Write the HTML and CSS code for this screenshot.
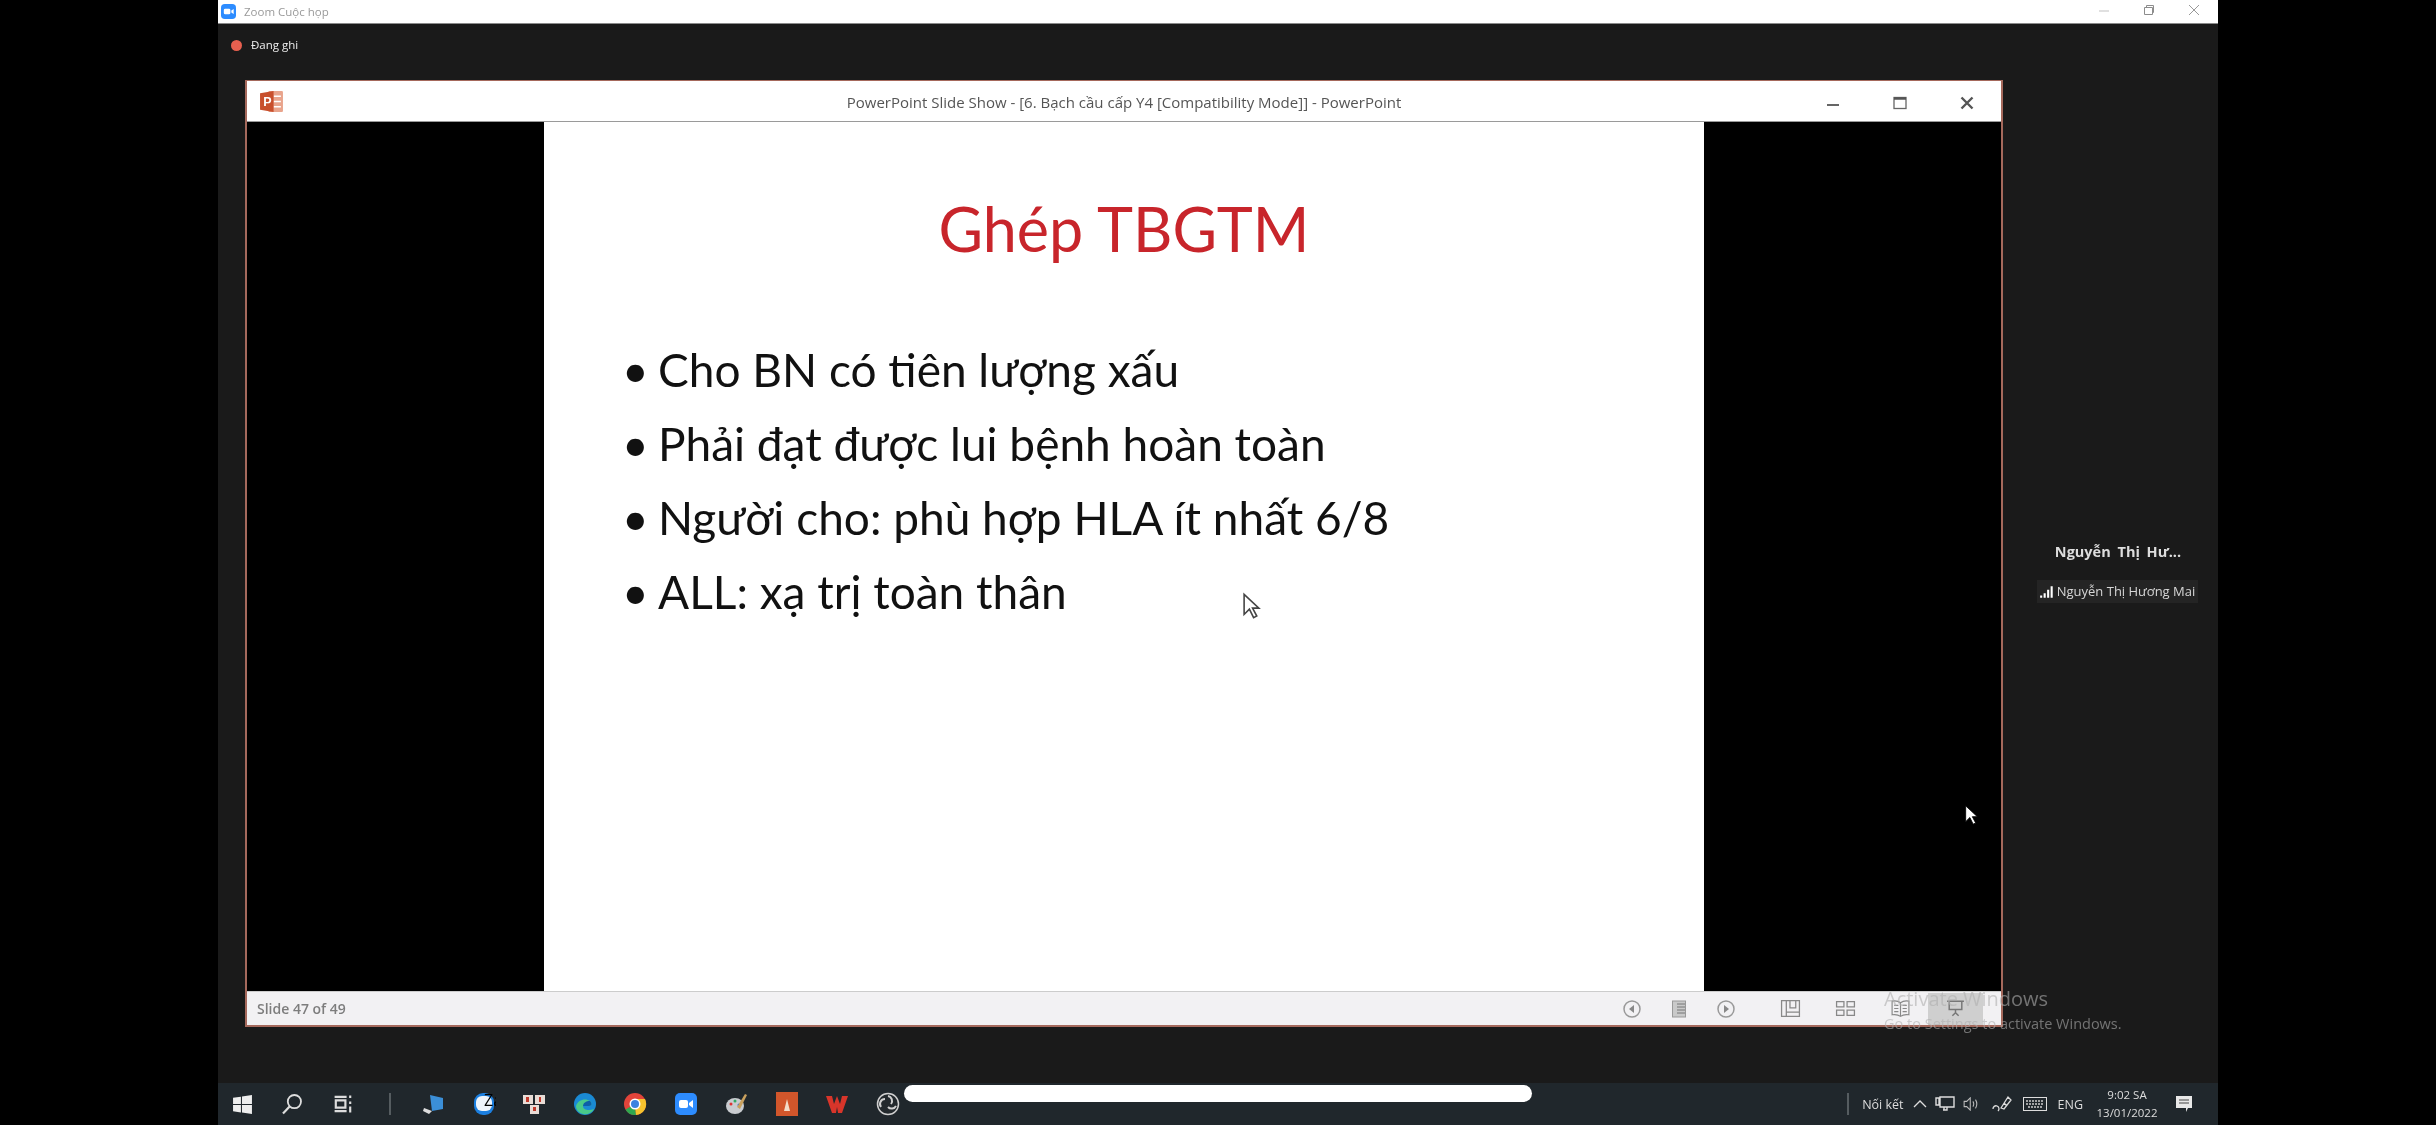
FILE: index.html
```html
<!DOCTYPE html>
<html lang="vi">
<head>
  <meta charset="UTF-8">
  <title>Zoom Cuộc họp</title>
  <link rel="stylesheet" href="styles.css">
</head>
<body>
<div class="screen">

  <div class="zoom-title">
    <svg class="zoom-logo" viewBox="0 0 16 16"><rect width="16" height="16" rx="4" fill="#2d8cff"/><rect x="3" y="5" width="7" height="6" rx="1.5" fill="#fff"/><path d="M11 7l2.500-1.800v5.600L11 9z" fill="#fff"/></svg>
    <span class="zoom-name">Zoom Cuộc họp</span>
    <div class="zoom-btns">
      <svg viewBox="0 0 14 14"><path d="M2 8h10" stroke="#ccc" stroke-width="1.200"/></svg>
      <svg viewBox="0 0 14 14"><path d="M2.500 4.500h8v7h-8zM4.500 4.500v-2h7v7h-1" fill="none" stroke="#8c8c8c" stroke-width="1"/></svg>
      <svg viewBox="0 0 14 14"><path d="M2 2l10 10M12 2L2 12" stroke="#999" stroke-width="1"/></svg>
    </div>
  </div>

  <div class="meeting">
    <div class="main-col">
      <div class="rec-row">
        <span class="rec-dot"></span>
        <span>Đang ghi</span>
      </div>

      <div class="ppt">
        <div class="ppt-title">
          <svg class="ppt-logo" viewBox="0 0 24 24"><rect x="9" y="2" width="14" height="20" rx="1" fill="#e9a48c"/><path d="M14 7h7M14 12h7M14 17h7" stroke="#fff" stroke-width="1.500"/><path d="M1 4l13-2v20L1 20z" fill="#c8502d"/><text x="4" y="16" class="ppt-logo-p">P</text></svg>
          <span class="ppt-name">PowerPoint Slide Show - [6. Bạch cầu cấp Y4 [Compatibility Mode]] - PowerPoint</span>
          <div class="ppt-btns">
            <svg viewBox="0 0 16 16"><path d="M2 10h12" stroke="#666" stroke-width="2"/></svg>
            <svg viewBox="0 0 16 16"><rect x="2" y="2.500" width="12" height="11" fill="none" stroke="#666" stroke-width="1.300"/><path d="M2 3.500h12" stroke="#555" stroke-width="2.500"/></svg>
            <svg viewBox="0 0 16 16"><path d="M2.500 2.500l11 11M13.500 2.500l-11 11" stroke="#555" stroke-width="2.400"/></svg>
          </div>
        </div>

        <div class="stage">
          <div class="slide">
            <h1>Ghép TBGTM</h1>
            <ul>
              <li>Cho BN có tiên lượng xấu</li>
              <li>Phải đạt được lui bệnh hoàn toàn</li>
              <li>Người cho: phù hợp HLA ít nhất 6/8</li>
              <li>ALL: xạ trị toàn thân</li>
            </ul>
          </div>
        </div>

        <div class="ppt-status">
          <span class="slide-count">Slide 47 of 49</span>
          <div class="nav-icons">
            <svg viewBox="0 0 20 20"><circle cx="10" cy="10" r="8" fill="none" stroke="#999" stroke-width="1.500"/><path d="M12 6v8l-5-4z" fill="#888"/></svg>
            <svg viewBox="0 0 20 20"><rect x="3.500" y="2" width="13" height="16" fill="#c9c9c9" stroke="#999"/><path d="M8 5h8M8 8h8M8 11h8M8 14h8" stroke="#777"/></svg>
            <svg viewBox="0 0 20 20"><circle cx="10" cy="10" r="8" fill="none" stroke="#999" stroke-width="1.500"/><path d="M8 6v8l5-4z" fill="#888"/></svg>
          </div>
          <div class="view-icons">
            <span class="view-btn"><svg viewBox="0 0 20 20"><path d="M1.500 2.500h17v15h-17zM6 2.500v15M6 13.500h12.500M9.500 2.500v7h5.500v-7" fill="none" stroke="#888" stroke-width="1.200"/></svg></span>
            <span class="view-btn"><svg viewBox="0 0 20 20"><path d="M1.500 3.500h7v5h-7zM11.500 3.500h7v5h-7zM1.500 11.500h7v5h-7zM11.500 11.500h7v5h-7z" fill="none" stroke="#888" stroke-width="1.200"/></svg></span>
            <span class="view-btn"><svg viewBox="0 0 20 20"><path d="M10 4.500C8 3 5 2.500 2 3v13c3-.5 6 0 8 1.500 2-1.500 5-2 8-1.500V3c-3-.5-6 0-8 1.500zM10 4.500v13M4 7h4M4 10h4M4 13h4M12 7h4M12 10h4M12 13h4" fill="none" stroke="#888" stroke-width="1.100"/></svg></span>
            <span class="view-btn is-on"><svg viewBox="0 0 20 20"><path d="M2 3h16M4 3v8h12V3M10 11v3M7 17l3-3 3 3" fill="none" stroke="#777" stroke-width="1.400"/></svg></span>
          </div>
        </div>
      </div>
    </div>

    <aside class="sidebar">
      <div class="person-name">Nguyễn Thị Hư...</div>
      <div class="person-tag">
        <svg viewBox="0 0 12 10"><path d="M1 8v2M4 6v4M7 3v7M10 0v10" stroke="#fff" stroke-width="1.800"/></svg>
        <span>Nguyễn Thị Hương Mai</span>
      </div>
    </aside>
  </div>

  <div class="taskbar">
    <div class="task-left">
      <svg class="t-win" viewBox="0 0 20 20"><path d="M1 3.500l7.500-1v7H1zM9.500 2.300L19 1v8.500H9.500zM1 10.500h7.500v7l-7.500-1zM9.500 10.500H19V19l-9.500-1.300z" fill="#eee"/></svg>
      <svg viewBox="0 0 20 20"><circle cx="12" cy="8" r="5.500" fill="none" stroke="#ddd" stroke-width="1.500"/><path d="M8 12l-5.500 6" stroke="#ddd" stroke-width="1.800"/></svg>
      <svg viewBox="0 0 20 20"><path d="M3 4h10M3 16h10M4 7h8v6H4zM16 3v2M16 8v2M16 12v5" fill="none" stroke="#ddd" stroke-width="1.800"/></svg>
      <span class="t-sep"></span>
      <svg viewBox="0 0 24 24"><path d="M9 3l13 3v11l-11 2z" fill="#3b8fd8"/><path d="M3 16l8 3-3 3-6-3z" fill="#ddd"/></svg>
      <svg viewBox="0 0 24 24"><rect x="2" y="1" width="20" height="22" rx="9" fill="#1b7fe0"/><rect x="4" y="4" width="16" height="15" rx="6" fill="#eef4fb"/><text x="12" y="14" class="zalo-txt">Zalo</text></svg>
      <svg viewBox="0 0 24 24"><rect x="1" y="3" width="10" height="9" fill="#e8dcd6"/><rect x="13" y="3" width="10" height="9" fill="#e8dcd6"/><rect x="8" y="13" width="9" height="9" fill="#e8dcd6"/><path d="M4 5h3v5H4zM17 5h2v5h-2zM11 15h3v4h-3z" fill="#c0392b"/></svg>
      <svg viewBox="0 0 24 24"><circle cx="12" cy="12" r="11" fill="#1a8ad4"/><path d="M3 14c2-7 10-8 14-5 2 2 2 5-1 5h-6c0 4 6 5 11 3-2 4-7 6-11 5-4-1-7-4-7-8z" fill="#49c98a"/><path d="M10 14c0-3 3-5 7-5 2 2 2 5-1 5z" fill="#0d5ea8"/></svg>
      <svg viewBox="0 0 24 24"><circle cx="12" cy="12" r="11" fill="#e2443a"/><path d="M12 12L2.500 17.500A11 11 0 0 0 13 23z" fill="#2fa84f"/><path d="M12 7h10a11 11 0 0 1-9 16l-1-11z" fill="#f7c32e"/><circle cx="12" cy="12" r="5.500" fill="#fff"/><circle cx="12" cy="12" r="4" fill="#3b82e0"/></svg>
      <svg viewBox="0 0 24 24"><rect x="1" y="1" width="22" height="22" rx="5" fill="#2d8cff"/><rect x="5" y="8" width="9" height="8" rx="2" fill="#fff"/><path d="M15 11l4-3v8l-4-3z" fill="#fff"/></svg>
      <svg viewBox="0 0 24 24"><ellipse cx="11" cy="14" rx="9" ry="8" fill="#c9ccd0"/><circle cx="7" cy="12" r="1.500" fill="#d33"/><circle cx="11" cy="9" r="1.500" fill="#3a6"/><circle cx="15" cy="13" r="1.500" fill="#36c"/><path d="M13 15L21 2l2 1-7 14z" fill="#c9a15e"/></svg>
      <svg viewBox="0 0 24 24"><rect x="1" y="0" width="22" height="24" fill="#d2562b"/><path d="M12 7l3 12H9z" fill="#f3dcc8"/></svg>
      <svg viewBox="0 0 24 24"><path d="M1 4h6l2 8 3-8 3 8 2-8h6l-6 17h-4l-1-6-1 6H7z" fill="#d8352a"/></svg>
      <svg viewBox="0 0 24 24"><circle cx="12" cy="12" r="10.500" fill="#23292d" stroke="#d0d0d0" stroke-width="1.500"/><path d="M12 4a5 5 0 0 1 3 8M20 14a5 5 0 0 1-8 1M5 15a5 5 0 0 1 4-8" fill="none" stroke="#d0d0d0" stroke-width="2"/></svg>
    </div>

    <div class="tray">
      <span class="t-sep"></span>
      <span class="tray-text">Nối kết</span>
      <svg class="tr-chev" viewBox="0 0 14 14"><path d="M1 10l6-6 6 6" fill="none" stroke="#ddd" stroke-width="1.300"/></svg>
      <svg class="tr-net" viewBox="0 0 20 16"><path d="M5 1h14v10H5zM1 2h3v7H1zM9 11v3M12 11v3H8" fill="none" stroke="#ddd" stroke-width="1.400"/></svg>
      <svg class="tr-vol" viewBox="0 0 20 16"><path d="M1 5h3l4-4v14l-4-4H1zM11 5q2 3 0 6M14 3q3 5 0 10" fill="none" stroke="#bbb" stroke-width="1.200"/></svg>
      <svg class="tr-link" viewBox="0 0 20 18"><path d="M1 14a3 3 0 1 1 5 2M9 13l7-11 3 3-7 9zM12 8l3 3" fill="none" stroke="#ddd" stroke-width="1.300"/></svg>
      <svg class="tr-kbd" viewBox="0 0 24 14"><rect x=".5" y=".5" width="23" height="13" fill="none" stroke="#ddd"/><path d="M3 4h18M3 7h18M5 10h14" stroke="#ccc" stroke-width="1.300" stroke-dasharray="2 1"/></svg>
      <span class="tray-text tr-lang">ENG</span>
      <div class="clock"><span>9:02 SA</span><span>13/01/2022</span></div>
      <svg class="tr-note" viewBox="0 0 18 18"><path d="M1 1h16v12h-4l-2 4v-4H1z" fill="#e8e8e8"/><path d="M4 5h10M4 8h10" stroke="#444"/></svg>
    </div>
  </div>

  <div class="seek-bar"></div>

  <div class="activate">
    <div class="act-big">Activate Windows</div>
    <div class="act-small">Go to Settings to activate Windows.</div>
  </div>

  <svg class="cursor-hollow" viewBox="0 0 18 26"><path d="M2 2v19l5-5 4 8 3-1.500-4-7.500h6z" fill="#fff" stroke="#444" stroke-width="1.500"/></svg>
  <svg class="cursor-white" viewBox="0 0 18 26"><path d="M2 2v19l5-5 4 8 3-1.500-4-7.500h6z" fill="#fff" stroke="#000" stroke-width="1"/></svg>
</div>
</body>
</html>
```

FILE: styles.css
```css
html, body {
  margin: 0;
  padding: 0;
  background: #000;
}

.screen {
  position: relative;
  width: 2000px;
  height: 1125px;
  margin: 0 auto;
  display: flex;
  flex-direction: column;
  overflow: hidden;
  font-family: "Open Sans", "Noto Sans", sans-serif;
  filter: blur(0.6px);
}

/* zoom window bar */
.zoom-title {
  height: 23px;
  background: #fff;
  border-bottom: 1px solid #8a8a8a;
  display: flex;
  align-items: center;
  padding-left: 3px;
  flex-shrink: 0;
}
.zoom-logo { width: 15px; height: 15px; margin-top: -1px; }
.zoom-name { margin-left: 8px; font-size: 11.5px; color: #9a9a9a; }
.zoom-btns { margin-left: auto; display: flex; gap: 31px; padding-right: 17px; margin-top: -4px; }
.zoom-btns svg { width: 14px; height: 14px; }

.meeting {
  flex: 1;
  background: #1a1a1a;
  display: flex;
}
.main-col { width: 1785px; padding-left: 27px; box-sizing: border-box; }

.rec-row {
  height: 56px;
  box-sizing: border-box;
  padding: 12px 0 0 -0px;
  margin-left: -14px;
  display: flex;
  align-items: flex-start;
  gap: 9px;
  color: #eee;
  font-size: 11.500px;
  line-height: 18px;
}
.rec-dot {
  width: 11px;
  height: 11px;
  margin-top: 4px;
  border-radius: 50%;
  background: #e8604f;
}

/* powerpoint window */
.ppt {
  width: 1758px;
  height: 947px;
  box-sizing: border-box;
  border: 2px solid #a5695c;
  border-top-width: 1px;
  display: flex;
  flex-direction: column;
  background: #fff;
}
.ppt-title {
  position: relative;
  height: 41px;
  flex-shrink: 0;
  display: flex;
  align-items: center;
  justify-content: center;
  border-bottom: 1px solid #9a9a9a;
  box-sizing: border-box;
}
.ppt-logo { position: absolute; left: 12px; top: 8px; width: 25px; height: 25px; }
.ppt-logo-p { font: bold 12px "Liberation Sans", sans-serif; fill: #fff; }
.ppt-name { font-size: 15px; color: #555; font-family: "Open Sans", sans-serif; margin-top: 2px; }
.ppt-btns {
  position: absolute;
  right: 26px;
  top: 14px;
  display: flex;
  gap: 51px;
}
.ppt-btns svg { width: 16px; height: 16px; }

.stage {
  flex: 1;
  background: #000;
  display: flex;
  justify-content: center;
}
.slide {
  width: 1160px;
  background: #fff;
  box-sizing: border-box;
  padding-top: 70px;
}
.slide h1 {
  margin: 0;
  text-align: center;
  font: 400 61px/1.2 Lato, "Noto Sans", sans-serif;
  color: #c8252b;
  padding-left: 0;
}
.slide ul {
  list-style: none;
  margin: 68px 0 0;
  padding: 0 0 0 78px;
  font: 400 46px/74px Lato, "Noto Sans", sans-serif;
  color: #111;
}
.slide li {
  display: flex;
  gap: 0;
}
.slide li::before {
  content: "•";
  width: 36px;
  flex-shrink: 0;
}

.ppt-status {
  height: 34px;
  flex-shrink: 0;
  background: #f2f1f3;
  display: flex;
  align-items: center;
  padding-left: 10px;
  border-top: 1px solid #ccc;
  box-sizing: border-box;
}
.slide-count { font-size: 14px; font-weight: 600; color: #7d7d7d; }
.nav-icons { margin-left: auto; display: flex; gap: 27px; }
.nav-icons svg { width: 20px; height: 20px; }
.view-icons { display: flex; margin-left: 27px; padding-right: 18px; }
.view-btn {
  width: 55px;
  height: 32px;
  display: flex;
  align-items: center;
  justify-content: center;
}
.view-btn svg { width: 21px; height: 21px; }
.view-btn.is-on { background: #cfcfcf; }

/* right column */
.sidebar {
  flex: 1;
  display: flex;
  flex-direction: column;
  align-items: center;
  padding-top: 518px;
  color: #ddd;
}
.person-name {
  font-size: 14.500px;
  font-weight: 700;
  word-spacing: 3px;
  color: #ddd;
  line-height: 20px;
  margin-left: 15px;
}
.person-tag {
  margin: 18px 0 0 14px;
  padding: 2px 3px;
  background: #242424;
  display: flex;
  align-items: center;
  gap: 3px;
  font-size: 13px;
  line-height: 19px;
  color: #d6d6d6;
}
.person-tag svg { width: 14px; height: 12px; }

/* windows taskbar */
.taskbar {
  height: 42px;
  flex-shrink: 0;
  background: #20272c;
  display: flex;
  align-items: center;
  justify-content: space-between;
}
.task-left { display: flex; align-items: center; padding-left: 14px; }
.task-left svg { width: 24px; height: 24px; margin-right: 26.500px; flex-shrink: 0; }
.task-left svg.t-win { width: 21px; height: 21px; margin-right: 27px; }
.t-sep { width: 2px; height: 22px; background: #555c60; }
.task-left .t-sep { margin: 0 30px 0 8px; }

.tray { display: flex; align-items: center; padding-right: 25px; color: #ddd; }
.tray-text { font-size: 12.500px; margin-left: 13px; white-space: nowrap; }
.tr-chev { width: 14px; height: 14px; margin-left: 9px; }
.tr-net { width: 20px; height: 16px; margin-left: 8px; }
.tr-vol { width: 18px; height: 14px; margin-left: 8px; }
.tr-link { width: 20px; height: 18px; margin-left: 11px; }
.tr-kbd { width: 24px; height: 14px; margin-left: 11px; }
.tr-lang { margin-left: 11px; }
.clock {
  margin-left: 14px;
  width: 60px;
  display: flex;
  flex-direction: column;
  align-items: center;
  font-size: 11.500px;
  line-height: 18px;
}
.tr-note { width: 18px; height: 18px; margin-left: 18px; }

/* overlays over the recording */
.seek-bar {
  position: absolute;
  left: 686px;
  top: 1085px;
  width: 628px;
  height: 17px;
  border-radius: 9px;
  background: #fff;
}
.activate {
  position: absolute;
  left: 1666px;
  top: 985px;
  color: rgba(175, 175, 175, 0.6);
}
.act-big { font-size: 20px; line-height: 27px; }
.act-small { font-size: 14.500px; line-height: 20px; margin-top: 2px; }

.cursor-hollow {
  position: absolute;
  left: 1024px;
  top: 592px;
  width: 19px;
  height: 28px;
}
.cursor-white {
  position: absolute;
  left: 1746px;
  top: 804px;
  width: 15px;
  height: 22px;
}
```
